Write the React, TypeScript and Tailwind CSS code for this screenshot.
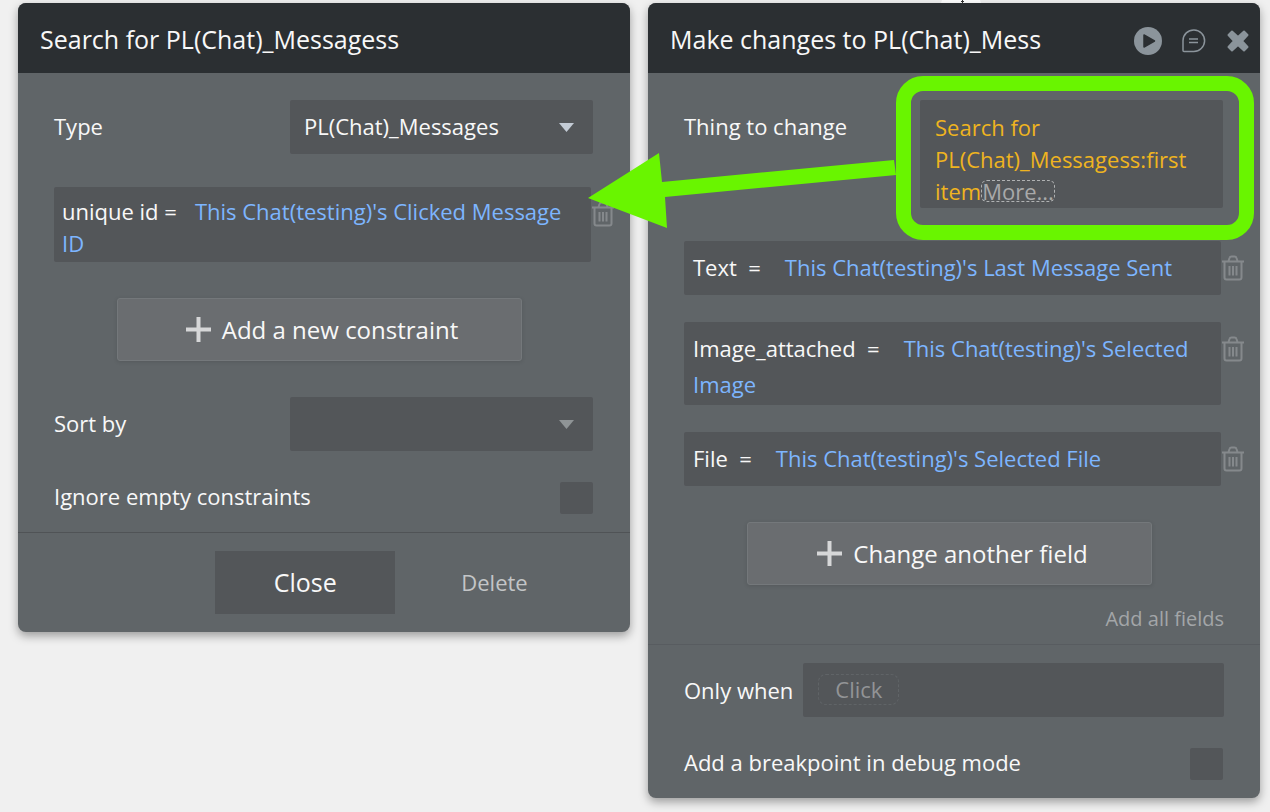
import type { ReactNode } from "react";

function TrashIcon() {
  return (
    <svg className="h-[26px] w-[22px]" viewBox="0 0 22 26" fill="none" stroke="#85898c" strokeWidth={2} strokeLinejoin="round">
      <path d="M0 6.500h22M6.500 6l1-3q.4-1.500 2-1.500h3q1.600 0 2 1.500l1 3" />
      <path d="M2.500 7v15.500q0 2 2 2h13q2 0 2-2V7M7.500 11v9.500M11 11v9.500M14.500 11v9.500" />
    </svg>
  );
}

function PlusIcon() {
  return (
    <svg className="h-[25px] w-[25px]" viewBox="0 0 25 25" fill="#d6d7d8">
      <path d="M10.500 0h4v10.500H25v4H14.500V25h-4V14.500H0v-4h10.500z" />
    </svg>
  );
}

function Panel({ title, actions, children }: { title: string; actions?: ReactNode; children: ReactNode }) {
  return (
    <section className="relative min-w-0 flex-1 rounded-lg bg-[#606568] shadow-[0_4px_10px_rgba(0,0,0,0.35)]">
      <header className="flex h-[70px] items-center justify-between rounded-t-lg bg-[#2b2f32] pr-[11px] pl-[22px]">
        <h2 className="pt-[2px] text-[25px] leading-8 whitespace-nowrap">{title}</h2>
        {actions}
      </header>
      {children}
    </section>
  );
}

function Dropdown({ id, value, muted }: { id: string; value: string; muted?: boolean }) {
  return (
    <div className="relative w-[303px]">
      <select id={id} defaultValue={value} className="h-[54px] w-full appearance-none rounded-xs bg-[#535659] px-[14px] pb-[2px]">
        <option value={value}>{value}</option>
      </select>
      <svg className="pointer-events-none absolute top-[23px] right-[19px] h-[9px] w-[15px]" viewBox="0 0 15 9">
        <path d="M0 0h15L7.500 9z" fill={muted ? "#8f9496" : "#c3cbd5"} />
      </svg>
    </div>
  );
}

function FieldRow({ children, className }: { children: ReactNode; className: string }) {
  return (
    <div className="-mr-[21px] flex items-start gap-px">
      <p className={`flex-1 rounded-xs bg-[#535659] ${className}`}>{children}</p>
      <button aria-label="Delete" className="mt-[14px]">
        <TrashIcon />
      </button>
    </div>
  );
}

function AddButton({ children }: { children: ReactNode }) {
  return (
    <div className="flex justify-center pr-[9px]">
      <button className="flex h-[63px] w-[405px] items-center justify-center gap-[11px] rounded-[3px] border border-[#74787b] bg-[#6a6d70] pl-[6px] text-[24px] shadow-[0_1px_4px_rgba(0,0,0,0.12)]">
        <PlusIcon />
        {children}
      </button>
    </div>
  );
}

function Checkbox({ id }: { id: string }) {
  return <input id={id} type="checkbox" className="h-8 w-[33px] appearance-none rounded-xs bg-[#535659]" />;
}

function Value({ children }: { children: ReactNode }) {
  return <span className="text-[#7db5ff]">{children}</span>;
}

function HeaderActions() {
  return (
    <div className="flex items-center gap-[20px] pt-[5px]">
      <button aria-label="Play">
        <svg className="h-7 w-7" viewBox="0 0 28 28">
          <circle cx="14" cy="14" r="14" fill="#8b949b" />
          <path d="M10 8l10.500 6L10 20z" fill="#2b2f32" stroke="#2b2f32" strokeWidth={1.500} strokeLinejoin="round" />
        </svg>
      </button>
      <button aria-label="Comment">
        <svg className="h-6 w-6" viewBox="0 0 24 24" fill="none" stroke="#8b949b" strokeWidth={1.500}>
          <path d="M1 21.500V11.500A10.800 10.800 0 1 1 11.500 22.500H2q-1 0-1-1z" />
          <path d="M7 10h9M7 13.500h9" />
        </svg>
      </button>
      <button aria-label="Close panel" className="pl-px">
        <svg className="h-[22px] w-[22px]" viewBox="0 0 22 22" stroke="#8b949b" fill="#8b949b" strokeWidth={2} strokeLinejoin="round">
          <path d="M5 1.500l6 5.500 6-5.500 3.500 3.500-5.500 6 5.500 6-3.500 3.500-6-5.500-6 5.500L1.500 17 7 11 1.500 5z" />
        </svg>
      </button>
    </div>
  );
}

// Green marker around the data source, with an arrow to the search panel.
function Callout() {
  return (
    <div className="pointer-events-none absolute -top-[24px] -right-[31px] -bottom-[32px] -left-[24px] z-10 rounded-[27px] border-[15px] border-[#69f500]">
      <svg className="absolute top-[62px] right-full mr-[15px] h-[75px] w-[308px]" viewBox="0 0 308 75" fill="#69f500">
        <path d="M0 45L71 0l3 29 232-22 2 15-231 22 2 31z" />
      </svg>
    </div>
  );
}

export default function App() {
  return (
    <main className="relative flex min-h-screen items-start gap-[18px] bg-[#f0f0f0] pt-[3px] pr-[10px] pb-[14px] pl-[18px] font-['Open_Sans',sans-serif] text-[22px] leading-8 text-[#f8f8f8]">
      <svg className="absolute top-0 right-[289px] h-[3px] w-[40px]" viewBox="0 0 40 3">
        <path d="M1 0h38l1 3H0z" fill="#fff" />
        <path d="M20 1h3v1h-3zM21 0h1v3h-1z" fill="#333" />
      </svg>
      <Panel title="Search for PL(Chat)_Messagess">
        <div className="border-b border-[#505356] pt-[27px] pr-[37px] pb-[18px] pl-[36px]">
          <div className="flex items-center justify-between">
            <label htmlFor="type" className="pb-[2px]">Type</label>
            <Dropdown id="type" value="PL(Chat)_Messages" />
          </div>
          <div className="mt-[33px] mb-[36px]">
            <FieldRow className="px-[8px] pt-[8px] pb-[3px]">
              <span className="mr-[18px]">unique id =</span>
              <Value>This Chat(testing)&apos;s Clicked Message ID</Value>
            </FieldRow>
          </div>
          <AddButton>Add a new constraint</AddButton>
          <div className="mt-[36px] flex items-center justify-between">
            <label htmlFor="sort" className="pb-[2px]">Sort by</label>
            <Dropdown id="sort" value="" muted />
          </div>
          <div className="mt-[31px] flex items-center justify-between">
            <label htmlFor="ignore" className="pb-[4px] leading-7">Ignore empty constraints</label>
            <Checkbox id="ignore" />
          </div>
        </div>
        <footer className="flex items-center justify-center gap-[66px] pt-[18px] pr-[20px] pb-[18px] pl-[115px]">
          <button className="h-[63px] w-[180px] bg-[#535659] pb-[2px] text-[25px]">Close</button>
          <button className="pb-[2px] text-[#c3c5c7]">Delete</button>
        </footer>
      </Panel>

      <Panel title="Make changes to PL(Chat)_Mess" actions={<HeaderActions />}>
        <div className="border-b border-[#585c60] pt-[27px] pr-[36px] pb-[9px] pl-[36px]">
          <div className="mr-px flex items-start justify-between">
            <span className="pt-[10px]">Thing to change</span>
            <div className="relative w-[303px]">
              <p className="h-[108px] rounded-xs bg-[#535659] px-[15px] pt-[11px] text-[#efb420]">
                Search for PL(Chat)_Messagess:first item
                <button className="h-[22px] rounded-md border border-dashed border-[#b0b2b3] leading-5 text-[#a8a9aa]">More...</button>
              </p>
              <Callout />
            </div>
          </div>
          <div className="mt-[33px] mr-px mb-[36px] flex flex-col gap-[27px]">
            <FieldRow className="px-[9px] pt-[10px] pb-[12px]">
              <span className="mr-[24px] whitespace-pre">Text  =</span>
              <Value>This Chat(testing)&apos;s Last Message Sent</Value>
            </FieldRow>
            <FieldRow className="px-[9px] pt-[8px] pb-[3px] leading-9">
              <span className="mr-[24px] whitespace-pre">Image_attached  =</span>
              <Value>This Chat(testing)&apos;s Selected Image</Value>
            </FieldRow>
            <FieldRow className="px-[9px] pt-[10px] pb-[12px]">
              <span className="mr-[24px] whitespace-pre">File  =</span>
              <Value>This Chat(testing)&apos;s Selected File</Value>
            </FieldRow>
          </div>
          <AddButton>Change another field</AddButton>
          <div className="mt-[18px] flex justify-end">
            <button className="text-[20px] text-[#a3a6a8]">Add all fields</button>
          </div>
        </div>
        <div className="pt-[18px] pr-[36px] pb-[18px] pl-[36px]">
          <div className="flex items-center gap-[10px]">
            <span>Only when</span>
            <div className="flex h-[54px] flex-1 items-center rounded-xs bg-[#535659] px-[15px] pb-[2px]">
              <button className="h-[31px] rounded-lg border border-dashed border-[#606467] px-[16px] leading-7 text-[#929496]">Click</button>
            </div>
          </div>
          <div className="mt-[31px] mr-px flex items-center justify-between">
            <label htmlFor="breakpoint" className="pb-[4px] leading-7">Add a breakpoint in debug mode</label>
            <Checkbox id="breakpoint" />
          </div>
        </div>
      </Panel>
    </main>
  );
}
